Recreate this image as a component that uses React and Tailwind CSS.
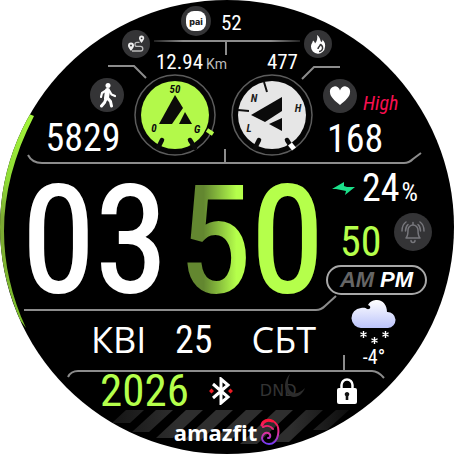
import React from "react";

const DIN = "font-['Roboto_Condensed','Roboto',sans-serif]";

function Badge({ className = "", children }) {
  return (
    <span className={`flex shrink-0 items-center justify-center rounded-full bg-[#343436] ${className}`}>
      {children}
    </span>
  );
}

function Frame() {
  return (
    <svg viewBox="0 0 454 454" className="absolute inset-0 h-full w-full" aria-hidden="true">
      <defs>
        <linearGradient id="fade" gradientUnits="userSpaceOnUse" x1="154" x2="300" y1="0" y2="0">
          <stop offset="0" stopColor="#222" />
          <stop offset="0.2" stopColor="#8c8c8c" />
          <stop offset="0.8" stopColor="#8c8c8c" />
          <stop offset="1" stopColor="#222" />
        </linearGradient>
        <linearGradient id="ring" x1="0" x2="0" y1="0" y2="1">
          <stop offset="0" stopColor="#a4f53c" />
          <stop offset="0.3" stopColor="#8fdc35" />
          <stop offset="0.5" stopColor="#7ba733" />
          <stop offset="1" stopColor="#7ec22c" />
        </linearGradient>
        <linearGradient id="stripe" gradientUnits="userSpaceOnUse" x1="100" x2="355" y1="0" y2="0">
          <stop offset="0" stopColor="#101010" />
          <stop offset="0.3" stopColor="#2e2e2e" />
          <stop offset="0.75" stopColor="#2e2e2e" />
          <stop offset="1" stopColor="#0a0a0a" />
        </linearGradient>
      </defs>
      <path d="M29 114l5 2C-4 190-5 260 26 328l-6-8C-10 250-8 180 29 114Z" fill="url(#ring)" />
      <g fill="url(#stripe)">
        <path d="M126 410h18l-14 13h-18Z" />
        <path d="M156 410h17l-24 22h-17Z" />
        <path d="M186 410h17l-30 28h-17Z" />
        <path d="M216 410h17l-32 30h-17Z" />
        <path d="M246 410h17l-32 30h-17Z" />
        <path d="M276 410h17l-36 34h-17Z" />
        <path d="M306 410h17l-34 32h-17Z" />
        <path d="M336 410h13l-22 20h-14Z" />
      </g>
      <rect x="154" y="40" width="146" height="2" fill="url(#fade)" />
      <g fill="none" stroke="#8c8c8c" strokeWidth="2">
        <path d="M226 42v13" />
        <path d="M108 66h26l12 12M340 67h-26l-12 12" />
        <path d="M28 155q4 8 14 8H404q5 0 9-4l8-6" />
        <path d="M225 149v14" />
        <path d="M24 310H316q5 0 9-4l11-10" />
        <path d="M68 377q3-6 10-6H372q6 0 12 7" />
        <path d="M344 355v16" />
      </g>
    </svg>
  );
}

function GoalDial() {
  return (
    <svg viewBox="0 0 82 82" className="h-[82px] w-[82px] shrink-0" role="img" aria-label="Goal">
      <circle cx="41" cy="41" r="40" fill="#050505" stroke="#5c5c5c" strokeWidth="1.5" />
      <circle cx="41" cy="41" r="34" fill="#b3f94a" />
      <path d="M41 21l8 13-11 16H25Z" fill="#0b0b08" />
      <path d="M51 38l7 12H45Z" fill="#0b0b08" />
      <path d="M28 66l-4 8M56 66l5 8" stroke="#0a0a0a" strokeWidth="4.5" strokeLinecap="round" />
      <path d="M73 56l6 4" stroke="#b3f94a" strokeWidth="4" />
      <g className="font-['Roboto_Condensed',sans-serif] font-bold italic" fontSize="11" fill="#0b0b0b" textAnchor="middle">
        <text x="41" y="19">50</text>
        <text x="20" y="58">0</text>
        <text x="63" y="59">G</text>
      </g>
    </svg>
  );
}

function HeartDial() {
  return (
    <svg viewBox="0 0 82 82" className="h-[82px] w-[82px] shrink-0" role="img" aria-label="Heart zone">
      <circle cx="41" cy="41" r="40" fill="#050505" stroke="#5c5c5c" strokeWidth="1.5" />
      <circle cx="41" cy="41" r="34" fill="#e6e6e6" />
      <path d="M51 23v14L34 48 20 41Z" fill="#0b0b0b" />
      <path d="M51 44v13L38 50Z" fill="#0b0b0b" />
      <path d="M33 8l3 10M7 36l11 1" stroke="#111" strokeWidth="2" />
      <path d="M28 66l-4 8M56 66l5 8" stroke="#0a0a0a" strokeWidth="4.5" strokeLinecap="round" />
      <path d="M59 70l4 5" stroke="#fff" strokeWidth="5" />
      <g className="font-['Roboto_Condensed',sans-serif] font-bold italic" fontSize="11" fill="#1c1c1c" textAnchor="middle">
        <text x="23" y="28">N</text>
        <text x="67" y="38">H</text>
        <text x="18" y="58">L</text>
      </g>
    </svg>
  );
}

function Header() {
  return (
    <header className="flex items-start justify-center gap-1 pt-[6px]">
      <Badge className="mt-6 h-7 w-7">
        <svg viewBox="0 0 20 20" className="h-5 w-5" fill="none">
          <path d="M6 17h8.500a2.300 2.300 0 000-4.600H11a2 2 0 010-4h2.500" stroke="#bbb" strokeWidth="1.3" />
          <path d="M5 17C2.500 14 2 13 2 11.600a3 3 0 016 0C8 13 7.500 14 5 17ZM15.500 9C13.300 6 13 5 13 4.200a2.600 2.600 0 015.200 0C18.200 5 17.700 6 15.500 9Z" fill="#eee" />
          <circle cx="5" cy="11.5" r="1" fill="#343436" />
          <circle cx="15.6" cy="4.3" r="0.9" fill="#343436" />
        </svg>
      </Badge>
      <div className="flex w-[146px] flex-col">
        <div className="flex items-center gap-[10px] pl-[27px]">
          <Badge className="h-[30px] w-[30px]">
            <span className="flex h-5 w-5 items-center justify-center rounded-[8px] bg-white font-['Inter',sans-serif] text-[9px] leading-none font-extrabold text-[#222]">
              pai
            </span>
          </Badge>
          <span className="pt-1 text-[21px] leading-none">52</span>
        </div>
        <div className="mt-4 flex items-baseline justify-between px-[2px] text-[21px] leading-[20px]">
          <span>
            12.94
            <span className="ml-[3px] font-['Roboto',sans-serif] text-[14px] text-[#bdbdbd]">Km</span>
          </span>
          <span>477</span>
        </div>
      </div>
      <Badge className="mt-6 h-7 w-7">
        <svg viewBox="0 0 20 20" className="h-5 w-5">
          <path d="M9 1c4 3 3 6 4.500 7 1-.5 1-1.500.8-2.500C17 8 17.500 10.500 17 13a7 7 0 01-14-.5C3 10 4.500 9 5 6.500 6.500 7.500 6.800 8.500 7 9.500 9 7.500 9.800 4 9 1Z" fill="#fff" />
          <path d="M11 17.500a3.600 3.600 0 003.500-4.500c-.5-1.500-1.500-2-2-3 0 2.500-2.500 2.500-2.500 5" fill="none" stroke="#343436" strokeWidth="1.5" />
        </svg>
      </Badge>
    </header>
  );
}

function Activity() {
  return (
    <section className="flex items-start pl-10">
      <div className="flex w-[86px] flex-col items-center pt-[4px]">
        <Badge className="mr-[2px] h-[34px] w-[34px] self-end">
          <svg viewBox="0 0 24 26" className="h-[26px] w-6" fill="none" stroke="#fff" strokeLinecap="round" strokeLinejoin="round">
            <circle cx="13" cy="3.5" r="2.5" fill="#fff" stroke="none" />
            <path d="M12.500 8.500l-1 7.500" strokeWidth="5" />
            <path d="M11 8.500l-4 2.500-1 4M14.500 9l2 3.500 3.500 1.500" strokeWidth="2.2" />
            <path d="M11 17l-1.500 3.500L6.500 24M13 16.500l2.500 3 1 4.500" strokeWidth="3" />
          </svg>
        </Badge>
        <span className="mt-[8px] text-[38px] leading-[36px]">5829</span>
      </div>
      <div className="ml-2 flex gap-[15px]">
        <GoalDial />
        <HeartDial />
      </div>
      <div className="ml-[10px] flex flex-col items-start pt-[5px]">
        <div className="flex items-center gap-[6px]">
          <Badge className="h-[34px] w-[34px]">
            <svg viewBox="0 0 24 22" className="h-5 w-[22px]">
              <path d="M12 21C6 16 1 12 1 7a5.500 5.500 0 0111-2 5.500 5.500 0 0111 2c0 5-5 9-11 14Z" fill="#fff" />
            </svg>
          </Badge>
          <span className="pt-[14px] text-[20px] leading-[20px] text-[#f70f4f] italic">High</span>
        </div>
        <span className="mt-[8px] ml-[4px] text-[38px] leading-[36px]">168</span>
      </div>
    </section>
  );
}

function Clock() {
  return (
    <section className="flex items-start pt-[6px] pl-[22px]">
      <time
        dateTime="2026-04-25T15:50"
        className="flex w-[302px] justify-between pt-[21px] text-[148px] leading-[116px] [-webkit-text-stroke:2px_currentColor]"
      >
        <span>03</span>
        <span className="text-[#b5ff4b]">
          <span className="bg-linear-to-r from-[#638730] from-35% to-[#b5ff4b] to-80% bg-clip-text text-transparent">5</span>0
        </span>
      </time>
      <div className="flex flex-col pt-[6px]">
        <div className="flex items-baseline pl-[8px]">
          <svg viewBox="0 0 24 14" className="h-[14px] w-6 self-center" aria-hidden="true">
            <path d="M0 8l12-7v4l3 1 8 0-10 8 1-4-10-2Z" fill="#1be08a" />
          </svg>
          <span className="ml-[6px] text-[38px] leading-[38px]">24</span>
          <span className="ml-[2px] text-[26px] leading-none">%</span>
        </div>
        <div className="mt-[6px] flex items-start pl-[16px]">
          <span className="pt-[8px] text-[42px] leading-[42px] text-[#b5ff4b]">50</span>
          <Badge className="ml-[13px] h-[38px] w-[38px]">
            <svg viewBox="0 0 28 28" className="h-7 w-7" fill="none" stroke="#77777c" strokeWidth="1.5" strokeLinecap="round" strokeLinejoin="round">
              <path d="M7 20c2-2 2-4 2-8a5 5 0 0110 0c0 4 0 6 2 8Z" />
              <path d="M12 22.500a2 2 0 004 0M14 4.500v2M6.500 13c0-3 .8-5 2.500-6.500M21.500 13c0-3-.8-5-2.500-6.500M3 13c0-4 1-7 4-9M25 13c0-4-1-7-4-9" />
            </svg>
          </Badge>
        </div>
        <div className="mt-[2px] ml-[2px] flex h-[30px] w-[101px] items-center justify-center gap-[6px] rounded-full border-2 border-[#a8a8a8] bg-black font-['Liberation_Sans',sans-serif] text-[22px] leading-none font-bold italic">
          <span className="text-[#666]">AM</span>
          <span>PM</span>
        </div>
      </div>
    </section>
  );
}

function Snow({ className = "" }) {
  return (
    <svg viewBox="0 0 8 8" className={`h-[7px] w-[7px] ${className}`} stroke="#fff" strokeWidth="1.6">
      <path d="M4 0v8M.5 2l7 4M7.500 2l-7 4" />
    </svg>
  );
}

function DateRow() {
  return (
    <section className="flex items-start pl-[91px]">
      <div className="flex w-[225px] items-baseline justify-between pt-[18px] font-['Open_Sans',sans-serif] text-[36px] leading-[44px]">
        <span>КВІ</span>
        <span className={`mr-[10px] text-[38px] ${DIN}`}>25</span>
        <span>СБТ</span>
      </div>
      <div className="ml-[35px] flex flex-col items-center">
        <svg viewBox="0 0 46 28" className="h-7 w-[46px]" role="img" aria-label="Snow">
          <defs>
            <linearGradient id="cloud" x1="0" x2="0" y1="0" y2="1">
              <stop offset="0" stopColor="#fff" />
              <stop offset="1" stopColor="#bcc4fb" />
            </linearGradient>
          </defs>
          <path d="M11 28a10 10 0 01-1-20c3-.5 5 0 6 1 3 1 5-3 1-4 2-4 6-5 9-5 6 0 10 5 10 12a8 8 0 011 16Z" fill="url(#cloud)" />
        </svg>
        <div className="mt-[3px] flex gap-[4px]">
          <Snow />
          <Snow className="mt-[6px]" />
          <Snow />
        </div>
        <span className="mt-[3px] text-[20px] leading-[20px]">-4°</span>
      </div>
    </section>
  );
}

function StatusRow() {
  return (
    <section className="mt-[5px] flex items-center pl-[100px]">
      <span className="text-[45px] leading-[38px] text-[#b5ff4b]">2026</span>
      <svg viewBox="0 0 24 28" className="ml-[20px] h-7 w-6" role="img" aria-label="Bluetooth">
        <path d="M4 7l15 13-7 6V2l7 6L4 21" fill="none" stroke="#fff" strokeWidth="3" />
        <path d="M0 14l2.500-2.500L5 14l-2.500 2.500ZM19 14l2.500-2.500L24 14l-2.500 2.500Z" fill="#e81c24" />
      </svg>
      <div className="relative ml-[27px] w-10 font-['DejaVu_Sans',sans-serif] text-[16px] leading-none text-[#343434]">
        DND
        <svg viewBox="0 0 26 26" className="absolute -top-[9px] left-[20px] h-[26px] w-[26px]" aria-hidden="true">
          <path d="M10 0C2 8 4 22 14 23c5 0 9-4 11-9-4 4-8 6-11 5C8 17 6 9 10 0Z" fill="#2c2c2c" />
        </svg>
      </div>
      <svg viewBox="0 0 20 26" className="ml-[37px] h-[26px] w-5" role="img" aria-label="Locked">
        <path d="M4.500 10V7a5.500 5.500 0 0111 0v3" fill="none" stroke="#fff" strokeWidth="2.5" />
        <rect y="10" width="20" height="16" rx="2" fill="#fff" />
        <path d="M10 14a2.300 2.300 0 011.300 4.200V22H8.700v-3.800A2.300 2.300 0 0110 14Z" fill="#111" />
      </svg>
    </section>
  );
}

function Brand() {
  return (
    <footer className="mt-[8px] flex items-center justify-center gap-[3px]">
      <span className="font-['Open_Sans',sans-serif] text-[22px] leading-[28px] font-bold">amazfit</span>
      <svg viewBox="0 0 20 28" className="h-7 w-5" fill="none" strokeLinecap="round" aria-hidden="true">
        <defs>
          <linearGradient id="spiral" gradientUnits="userSpaceOnUse" x1="0" x2="0" y1="2" y2="27">
            <stop offset="0" stopColor="#ff1236" />
            <stop offset="0.5" stopColor="#e02f9a" />
            <stop offset="1" stopColor="#6a3cff" />
          </linearGradient>
        </defs>
        <g stroke="url(#spiral)">
          <path d="M2 7C3 3 8 1 12 3" strokeWidth="3" />
          <path d="M13 3c5 3 6 9 5 14-1 6-5 9-9 9s-7-3-7-6 3-6 6-5 3 5 0 5M3 9c4-2 8-1 10 2" strokeWidth="2" />
        </g>
      </svg>
    </footer>
  );
}

export default function App() {
  return (
    <main className={`relative mx-auto aspect-square w-full max-w-[454px] overflow-hidden rounded-full bg-black text-white ${DIN}`}>
      <Frame />
      <div className="relative flex flex-col">
        <Header />
        <Activity />
        <Clock />
        <DateRow />
        <StatusRow />
        <Brand />
      </div>
    </main>
  );
}
